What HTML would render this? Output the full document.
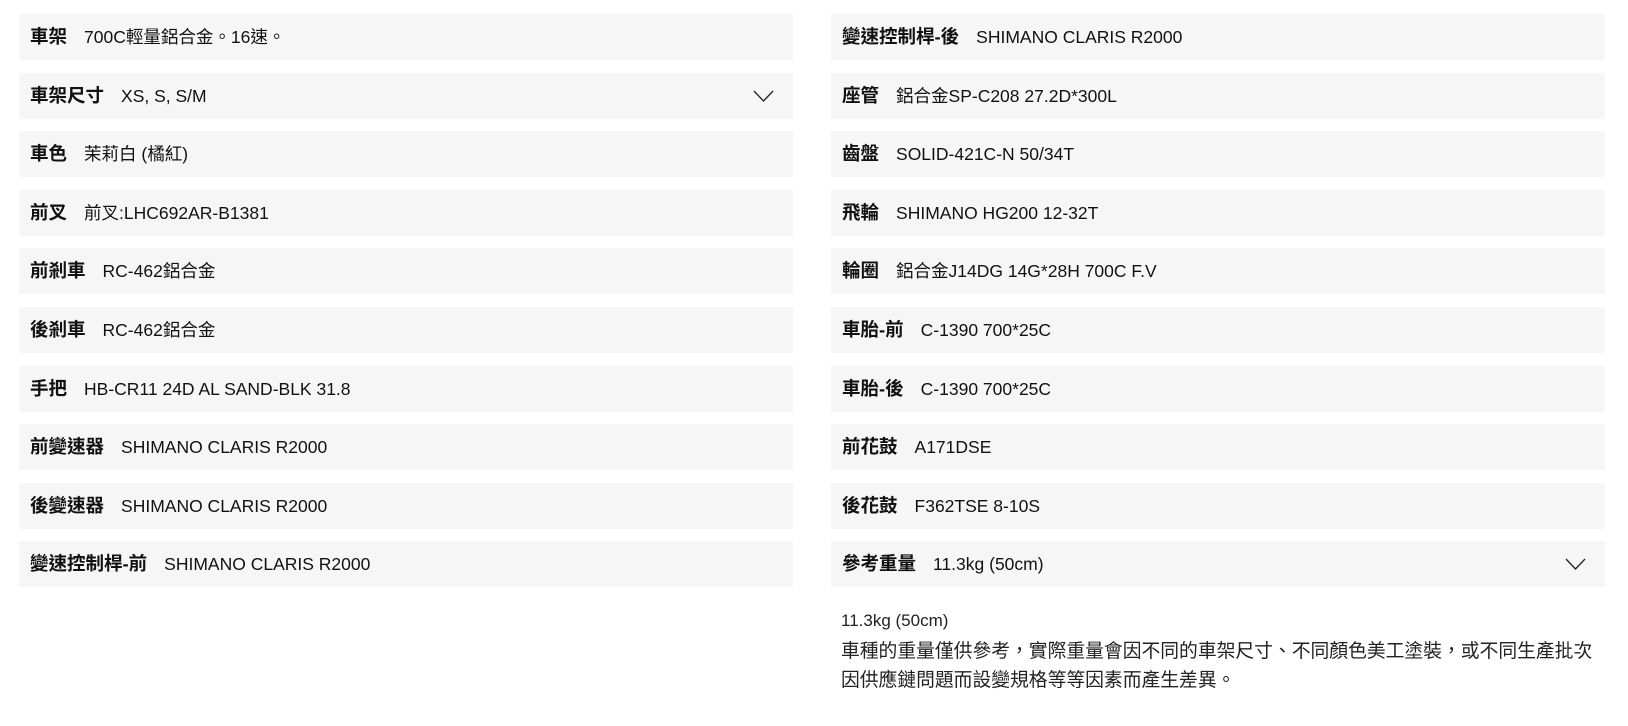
<!DOCTYPE html>
<html><head><meta charset="utf-8"><style>
*{margin:0;padding:0;box-sizing:border-box}
body{width:1628px;height:726px;background:#fff;font-family:"Liberation Sans","Noto Sans CJK TC",sans-serif;color:#111;position:relative;overflow:hidden}
.col{position:absolute;top:14px;width:774px}
.row{height:46px;line-height:46px;background:#f6f6f6;margin-bottom:12.6px;padding-left:11px;font-size:17.5px;position:relative;white-space:nowrap}
.row b{font-weight:700;margin-right:17px;font-size:18.5px}
.chev{position:absolute;right:19px;top:17px;width:21px;height:12px}
.desc{position:absolute;left:841px;top:605px;font-size:18.8px;line-height:29.5px;color:#222}
.desc .s{font-size:17px}
</style></head><body>
<div class="col" style="left:19px">
<div class="row"><b>車架</b>700C輕量鋁合金。16速。</div>
<div class="row"><b>車架尺寸</b>XS, S, S/M<svg class="chev" viewBox="0 0 21 12"><path d="M1 1L10.5 11L20 1" fill="none" stroke="#222" stroke-width="1.3"/></svg></div>
<div class="row"><b>車色</b>茉莉白 (橘紅)</div>
<div class="row"><b>前叉</b>前叉:LHC692AR-B1381</div>
<div class="row"><b>前剎車</b>RC-462鋁合金</div>
<div class="row"><b>後剎車</b>RC-462鋁合金</div>
<div class="row"><b>手把</b>HB-CR11 24D AL SAND-BLK 31.8</div>
<div class="row"><b>前變速器</b>SHIMANO CLARIS R2000</div>
<div class="row"><b>後變速器</b>SHIMANO CLARIS R2000</div>
<div class="row"><b>變速控制桿-前</b>SHIMANO CLARIS R2000</div>
</div>
<div class="col" style="left:831px">
<div class="row"><b>變速控制桿-後</b>SHIMANO CLARIS R2000</div>
<div class="row"><b>座管</b>鋁合金SP-C208 27.2D*300L</div>
<div class="row"><b>齒盤</b>SOLID-421C-N 50/34T</div>
<div class="row"><b>飛輪</b>SHIMANO HG200 12-32T</div>
<div class="row"><b>輪圈</b>鋁合金J14DG 14G*28H 700C F.V</div>
<div class="row"><b>車胎-前</b>C-1390 700*25C</div>
<div class="row"><b>車胎-後</b>C-1390 700*25C</div>
<div class="row"><b>前花鼓</b>A171DSE</div>
<div class="row"><b>後花鼓</b>F362TSE 8-10S</div>
<div class="row"><b>參考重量</b>11.3kg (50cm)<svg class="chev" viewBox="0 0 21 12"><path d="M1 1L10.5 11L20 1" fill="none" stroke="#222" stroke-width="1.3"/></svg></div>
</div>
<div class="desc"><span class="s">11.3kg (50cm)</span><br>車種的重量僅供參考，實際重量會因不同的車架尺寸、不同顏色美工塗裝，或不同生產批次<br>因供應鏈問題而設變規格等等因素而產生差異。</div>
</body></html>
